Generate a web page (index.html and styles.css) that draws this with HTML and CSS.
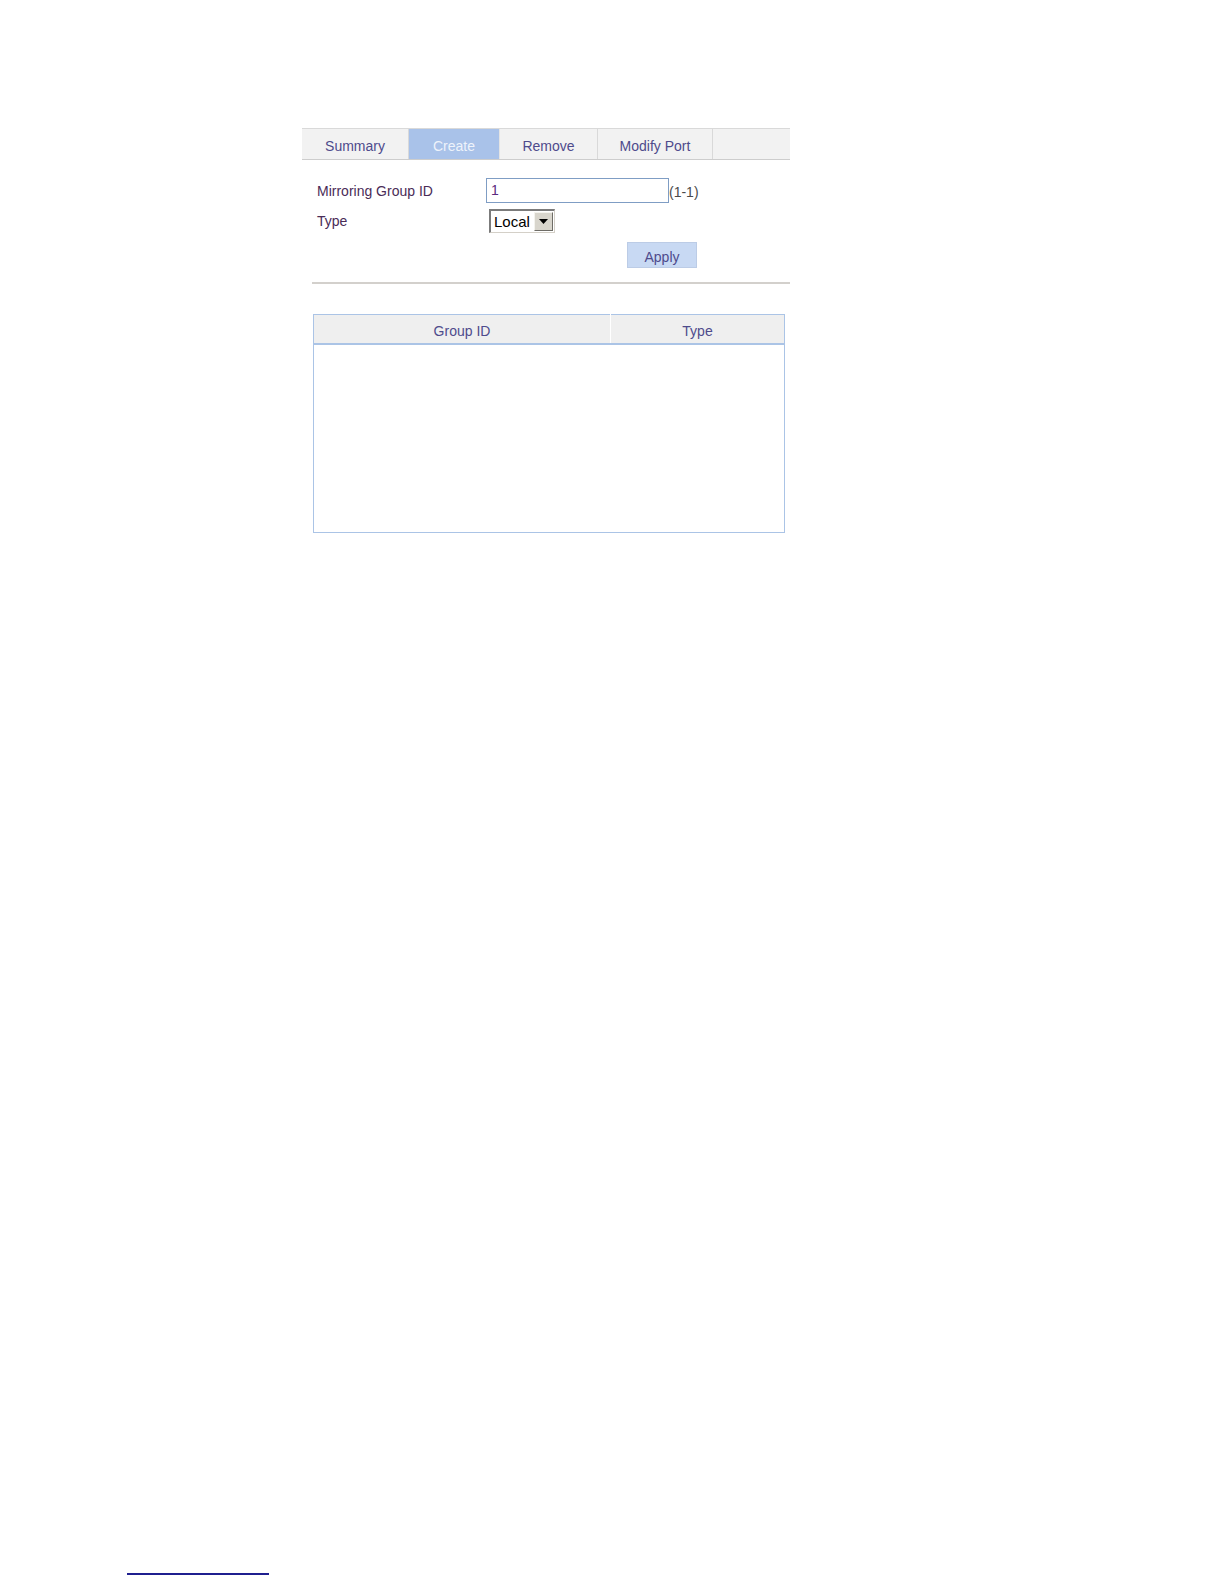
FILE: index.html
```html
<!DOCTYPE html>
<html lang="en">
<head>
<meta charset="utf-8">
<title>Mirroring Group - Create</title>
<link rel="stylesheet" href="styles.css">
</head>
<body>
<div class="page">
  <div class="panel">
    <div class="tabs">
      <div class="tab tab-summary">Summary</div>
      <div class="tab tab-create active">Create</div>
      <div class="tab tab-remove">Remove</div>
      <div class="tab tab-modify">Modify Port</div>
      <div class="tab-rest"></div>
    </div>

    <div class="form">
      <div class="row">
        <div class="label">Mirroring Group ID</div>
        <div class="field">
          <div class="input">1</div>
          <span class="hint">(1-1)</span>
        </div>
      </div>
      <div class="row row-type">
        <div class="label">Type</div>
        <div class="field">
          <div class="select">
            <span class="select-value">Local</span>
            <span class="select-btn">
              <svg width="9" height="5" viewBox="0 0 9 5"><path d="M0 0 H9 L4.5 5 Z" fill="#000"/></svg>
            </span>
          </div>
        </div>
      </div>
      <div class="actions">
        <div class="btn">Apply</div>
      </div>
    </div>

    <div class="separator"></div>

    <table class="grid">
      <thead>
        <tr>
          <th class="col-id">Group ID</th>
          <th class="col-type">Type</th>
        </tr>
      </thead>
      <tbody>
        <tr><td colspan="2" class="empty"></td></tr>
      </tbody>
    </table>
  </div>

  <div class="footer-rule"></div>
</div>
</body>
</html>
```

FILE: styles.css
```css
html, body {
  margin: 0;
  padding: 0;
  background: #ffffff;
}

body {
  font-family: "Liberation Sans", Arial, sans-serif;
  font-size: 14px;
  width: 1224px;
  height: 1584px;
  overflow: hidden;
}

.page {
  padding-top: 128px;
}

.panel {
  margin-left: 302px;
  width: 488px;
}

/* Tabs */
.tabs {
  display: flex;
  height: 30px;
  background: #f2f2f2;
  border-top: 1px solid #d9d9d9;
  border-bottom: 1px solid #cdcdcd;
}

.tab {
  display: flex;
  align-items: center;
  justify-content: center;
  color: #4e4b8c;
  font-size: 14px;
  border-right: 1px solid #d9d9d9;
  padding-top: 3px;
  box-sizing: border-box;
}

.tab-summary { width: 107px; }
.tab-create  { width: 91px; }
.tab-remove  { width: 98px; }
.tab-modify  { width: 115px; }
.tab-rest    { flex: 1; }

.tab.active {
  background: #a9c2e9;
  color: #eef3fb;
  border-right-color: #e4e4e4;
}

/* Form */
.form {
  padding-left: 15px;
  padding-top: 18px;
}

.row {
  display: flex;
  align-items: center;
  height: 25px;
}

.row-type {
  margin-top: 6px;
  height: 24px;
}

.label {
  width: 169px;
  color: #4a2c57;
  font-size: 14px;
}

.field {
  display: flex;
  align-items: center;
}

.input {
  box-sizing: border-box;
  width: 183px;
  height: 25px;
  border: 1px solid #7f9dc4;
  padding: 3px 0 0 4px;
  color: #5b2a7e;
  font-size: 14px;
}

.hint {
  color: #4a4a4a;
  font-size: 14px;
  padding-top: 3px;
}

.select {
  box-sizing: border-box;
  margin-left: 3px;
  width: 66px;
  height: 24px;
  display: flex;
  align-items: center;
  border-top: 2px solid #7b7b7b;
  border-left: 2px solid #7b7b7b;
  border-right: 1px solid #d4d0c8;
  border-bottom: 1px solid #d4d0c8;
  background: #ffffff;
  padding-left: 3px;
}

.select-value {
  flex: 1;
  color: #000000;
  font-size: 15px;
}

.select-btn {
  box-sizing: border-box;
  width: 19px;
  height: 19px;
  margin-right: 1px;
  background: #d8d5cc;
  border-top: 1px solid #f4f3ee;
  border-left: 1px solid #f4f3ee;
  border-right: 1px solid #6e6c66;
  border-bottom: 1px solid #6e6c66;
  display: flex;
  align-items: center;
  justify-content: center;
}

.actions {
  display: flex;
  margin-top: 9px;
  padding-left: 310px;
}

.btn {
  box-sizing: border-box;
  width: 70px;
  height: 26px;
  background: #c8d9f3;
  border: 1px solid #bccce6;
  color: #4e4b8c;
  font-size: 14px;
  display: flex;
  align-items: center;
  justify-content: center;
  padding-top: 3px;
}

/* Separator */
.separator {
  margin-top: 14px;
  margin-left: 10px;
  height: 2px;
  background: #d3d0cc;
}

/* Table */
.grid {
  margin-top: 30px;
  margin-left: 11px;
  width: 472px;
  height: 219px;
  border-collapse: collapse;
  border: 1px solid #abc4e6;
  table-layout: fixed;
}

.grid th {
  height: 25px;
  background: #efefef;
  color: #4e4b8c;
  font-weight: normal;
  font-size: 14px;
  padding: 3px 0 0 0;
  border-bottom: 2px solid #abc4e6;
  text-align: center;
}

.grid .col-id {
  width: 296px;
  border-right: 1px solid #ffffff;
}

.grid td.empty {
  padding: 0;
  background: #ffffff;
}

.footer-rule {
  margin-top: 1040px;
  margin-left: 127px;
  width: 142px;
  height: 2px;
  background: #1f1f8f;
}
```
